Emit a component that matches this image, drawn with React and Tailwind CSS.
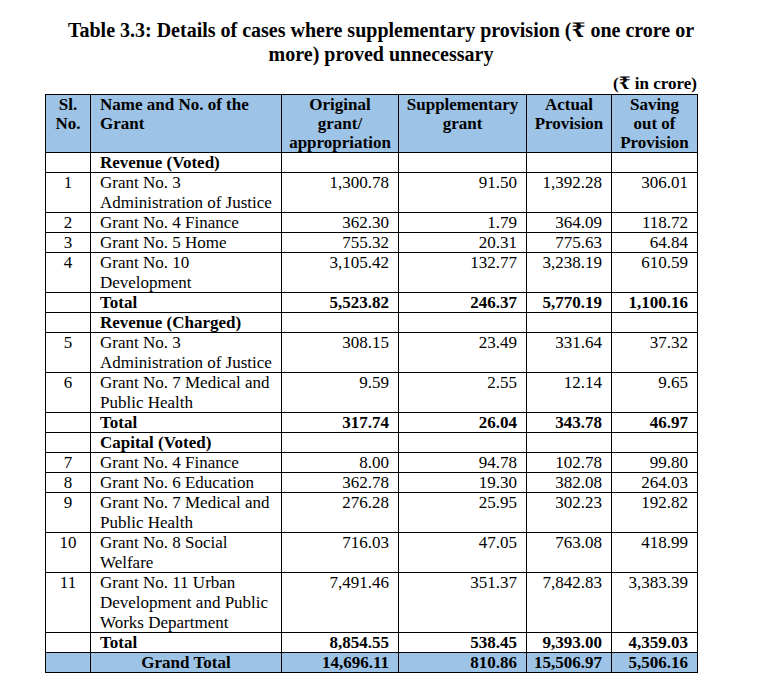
import React from "react";

const rows = [
  { type: "section", name: "Revenue (Voted)" },
  { sl: "1", lines: ["Grant No. 3", "Administration of Justice"], v: ["1,300.78", "91.50", "1,392.28", "306.01"] },
  { sl: "2", lines: ["Grant No. 4 Finance"], v: ["362.30", "1.79", "364.09", "118.72"] },
  { sl: "3", lines: ["Grant No. 5 Home"], v: ["755.32", "20.31", "775.63", "64.84"] },
  { sl: "4", lines: ["Grant No. 10", "Development"], v: ["3,105.42", "132.77", "3,238.19", "610.59"] },
  { type: "total", v: ["5,523.82", "246.37", "5,770.19", "1,100.16"] },
  { type: "section", name: "Revenue (Charged)" },
  { sl: "5", lines: ["Grant No. 3", "Administration of Justice"], v: ["308.15", "23.49", "331.64", "37.32"] },
  { sl: "6", lines: ["Grant No. 7 Medical and", "Public Health"], v: ["9.59", "2.55", "12.14", "9.65"] },
  { type: "total", v: ["317.74", "26.04", "343.78", "46.97"] },
  { type: "section", name: "Capital (Voted)" },
  { sl: "7", lines: ["Grant No. 4 Finance"], v: ["8.00", "94.78", "102.78", "99.80"] },
  { sl: "8", lines: ["Grant No. 6 Education"], v: ["362.78", "19.30", "382.08", "264.03"] },
  { sl: "9", lines: ["Grant No. 7 Medical and", "Public Health"], v: ["276.28", "25.95", "302.23", "192.82"] },
  { sl: "10", lines: ["Grant No. 8 Social", "Welfare"], v: ["716.03", "47.05", "763.08", "418.99"] },
  { sl: "11", lines: ["Grant No. 11 Urban", "Development and Public", "Works Department"], v: ["7,491.46", "351.37", "7,842.83", "3,383.39"] },
  { type: "total", v: ["8,854.55", "538.45", "9,393.00", "4,359.03"] },
];

const td = "border border-black p-0 align-top";
const inner = "-mb-px leading-[20px]";

export default function App() {
  return (
    <div
      className="bg-white w-[772px] h-[681px] text-black"
      style={{ fontFamily: '"Liberation Serif", "Times New Roman", "DejaVu Serif", serif' }}
    >
      <div className="ml-[45px] w-[672px] pt-[18px]">
        <h1 className="text-center font-bold text-[20px] leading-[24px]">
          Table 3.3: Details of cases where supplementary provision (₹ one crore or
          <br />
          more) proved unnecessary
        </h1>
        <div className="w-[652px] mt-[8px] text-right font-bold text-[17px] leading-[20px]">
          (₹ in crore)
        </div>
        <table className="w-[652px] border-collapse table-fixed text-[17px]">
          <colgroup>
            <col className="w-[45px]" />
            <col className="w-[191px]" />
            <col className="w-[117px]" />
            <col className="w-[128px]" />
            <col className="w-[85px]" />
            <col className="w-[86px]" />
          </colgroup>
          <thead>
            <tr className="bg-[#9dc3e6] font-bold leading-[19px]">
              <th className={`${td} text-center font-bold`}>Sl.<br />No.</th>
              <th className={`${td} text-left font-bold pl-[9px]`}>Name and No. of the<br />Grant</th>
              <th className={`${td} text-center font-bold`}>Original<br />grant/<br />appropriation</th>
              <th className={`${td} text-center font-bold`}>Supplementary<br />grant</th>
              <th className={`${td} text-center font-bold`}>Actual<br />Provision</th>
              <th className={`${td} text-center font-bold`}>Saving<br />out of<br />Provision</th>
            </tr>
          </thead>
          <tbody>
            {rows.map((r, i) => {
              if (r.type === "section") {
                return (
                  <tr key={i}>
                    <td className={td}><div className={inner}>&nbsp;</div></td>
                    <td className={`${td} pl-[9px] font-bold`}><div className={inner}>{r.name}</div></td>
                    <td className={td}></td>
                    <td className={td}></td>
                    <td className={td}></td>
                    <td className={td}></td>
                  </tr>
                );
              }
              if (r.type === "total") {
                return (
                  <tr key={i} className="font-bold">
                    <td className={td}><div className={inner}>&nbsp;</div></td>
                    <td className={`${td} pl-[9px]`}><div className={inner}>Total</div></td>
                    {r.v.map((x, j) => (
                      <td key={j} className={`${td} text-right pr-[9px]`}><div className={inner}>{x}</div></td>
                    ))}
                  </tr>
                );
              }
              return (
                <tr key={i}>
                  <td className={`${td} text-center`}><div className={inner}>{r.sl}</div></td>
                  <td className={`${td} pl-[9px]`}>
                    <div className={inner}>
                      {r.lines.map((l, k) => (
                        <div key={k}>{l}</div>
                      ))}
                    </div>
                  </td>
                  {r.v.map((x, j) => (
                    <td key={j} className={`${td} text-right pr-[9px]`}><div className={inner}>{x}</div></td>
                  ))}
                </tr>
              );
            })}
            <tr className="bg-[#9dc3e6] font-bold">
              <td className={td}><div className={inner}>&nbsp;</div></td>
              <td className={`${td} text-center`}><div className={inner}>Grand Total</div></td>
              {["14,696.11", "810.86", "15,506.97", "5,506.16"].map((x, j) => (
                <td key={j} className={`${td} text-right pr-[9px]`}><div className={inner}>{x}</div></td>
              ))}
            </tr>
          </tbody>
        </table>
      </div>
    </div>
  );
}
